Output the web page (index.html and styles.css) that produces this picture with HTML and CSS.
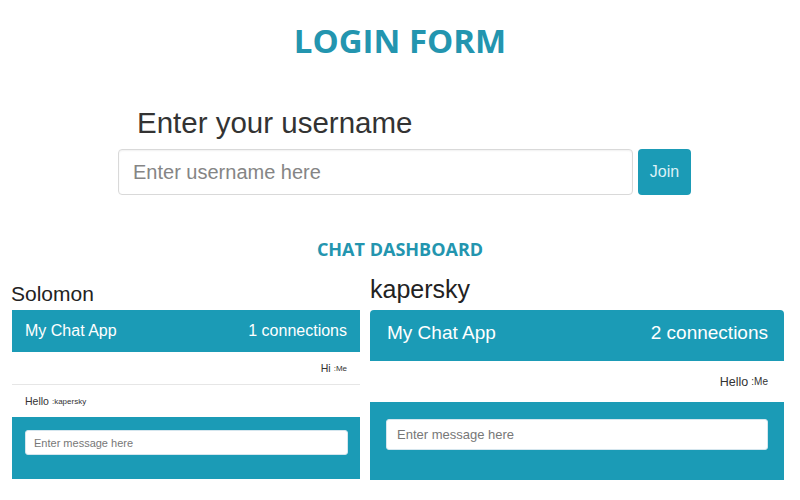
FILE: index.html
```html
<!DOCTYPE html>
<html lang="en">
<head>
  <meta charset="UTF-8" />
  <title>Chat App</title>
  <link rel="stylesheet" href="styles.css">
</head>
<body>

  <!-- Page Title -->
  <h1 class="page-title">LOGIN FORM</h1>

  <!-- Login -->
  <section class="login">
    <h2 class="login-label">Enter your username</h2>
    <form class="login-form">
      <input type="text" class="login-input" placeholder="Enter username here" />
      <button type="submit" class="join-btn">Join</button>
    </form>
  </section>

  <!-- Dashboard -->
  <h3 class="section-title">CHAT DASHBOARD</h3>

  <div class="dashboard">
    <div class="chat chat-small">
      <div class="chat-user">Solomon</div>
      <div class="chat-box">
        <div class="chat-header">
          <span>My Chat App</span>
          <span>1 connections</span>
        </div>
        <div class="msg msg-me">Hi <small>:Me</small></div>
        <div class="msg">Hello <small>:kapersky</small></div>
        <div class="chat-footer">
          <input type="text" class="msg-input" placeholder="Enter message here" />
        </div>
      </div>
    </div>

    <div class="chat chat-large">
      <div class="chat-user">kapersky</div>
      <div class="chat-box">
        <div class="chat-header">
          <span>My Chat App</span>
          <span>2 connections</span>
        </div>
        <div class="msg msg-me">Hello <small>:Me</small></div>
        <div class="chat-footer">
          <input type="text" class="msg-input" placeholder="Enter message here" />
        </div>
      </div>
    </div>
  </div>

</body>
</html>
```

FILE: styles.css
```css
/* === Body === */
body {
  margin: 0;
  padding-top: 21px;
  background: #ffffff;
  font-family: 'Liberation Sans', Arial, sans-serif;
  color: #333333;
}

/* === Titles === */
.page-title,
.section-title {
  font-family: 'Open Sans', 'Liberation Sans', sans-serif;
  font-weight: 700;
  color: #2395af;
  text-align: center;
  margin: 0;
}

.page-title {
  font-size: 33px;
  line-height: 40px;
}

.section-title {
  font-size: 18px;
  line-height: 22px;
  margin-top: 43px;
}

/* === Login === */
.login {
  width: 573px;
  margin: 45px 0 0 118px;
}

.login-label {
  margin: 0 0 9px 19px;
  font-size: 29.5px;
  line-height: 34px;
  font-weight: 400;
  color: #333333;
}

.login-form {
  display: flex;
  gap: 5px;
}

.login-input {
  flex: 1;
  height: 46px;
  box-sizing: border-box;
  padding: 0 14px;
  border: 1px solid #d9d9d9;
  border-radius: 4px;
  box-shadow: inset 0 1px 2px rgba(0, 0, 0, 0.06);
  font-family: inherit;
  font-size: 20px;
  color: #555555;
}

.login-input::placeholder {
  color: #858585;
}

.join-btn {
  width: 53px;
  height: 46px;
  border: none;
  border-radius: 4px;
  background: #1b9bb6;
  color: #dcf1f6;
  font-family: inherit;
  font-size: 16px;
  padding: 0;
}

/* === Dashboard === */
.dashboard {
  display: flex;
  gap: 10px;
  padding-left: 11px;
}

.chat {
  display: flex;
  flex-direction: column;
}

.chat-user {
  height: 50px;
  display: flex;
  align-items: flex-end;
  color: #222222;
  box-sizing: border-box;
}

.chat-box {
  display: flex;
  flex-direction: column;
  background: #ffffff;
}

.chat-header {
  display: flex;
  justify-content: space-between;
  align-items: center;
  box-sizing: border-box;
  background: #1b9bb6;
  color: #ffffff;
}

.msg {
  display: flex;
  align-items: center;
  color: #333333;
}

.msg-me {
  justify-content: flex-end;
}

.msg small {
  margin-left: 3px;
}

.chat-footer {
  background: #1b9bb6;
}

.msg-input {
  display: block;
  width: 100%;
  box-sizing: border-box;
  border: 1px solid #d5e6ee;
  border-radius: 3px;
  background: #ffffff;
  font-family: inherit;
}

.msg-input::placeholder {
  color: #777777;
}

/* --- small chat (Solomon) --- */
.chat-small {
  width: 349px;
}

.chat-small .chat-user {
  font-size: 21px;
  line-height: 26px;
  padding-bottom: 3px;
}

.chat-small .chat-box {
  margin-left: 1px;
}

.chat-small .chat-header {
  height: 42px;
  padding: 0 13px;
  font-size: 16px;
}

.chat-small .msg {
  height: 32px;
  padding: 0 13px;
  font-size: 10.5px;
}

.chat-small .msg + .msg {
  border-top: 1px solid #e6e6e6;
}

.chat-small .msg small {
  font-size: 8px;
}

.chat-small .chat-footer {
  padding: 13px 12px 24px 13px;
}

.chat-small .msg-input {
  height: 25px;
  padding: 0 8px;
  font-size: 11px;
}

/* --- large chat (kapersky) --- */
.chat-large {
  width: 414px;
}

.chat-large .chat-user {
  font-size: 25px;
  line-height: 30px;
  padding-bottom: 6px;
}

.chat-large .chat-box {
  border-radius: 4px 4px 0 0;
  overflow: hidden;
}

.chat-large .chat-header {
  height: 51px;
  padding: 0 16px 5px 17px;
  font-size: 19px;
}

.chat-large .msg {
  height: 41px;
  padding: 0 16px;
  font-size: 12.5px;
}

.chat-large .msg small {
  font-size: 10px;
}

.chat-large .chat-footer {
  padding: 17px 16px 30px 16px;
}

.chat-large .msg-input {
  height: 31px;
  padding: 0 10px;
  font-size: 13px;
}
```
